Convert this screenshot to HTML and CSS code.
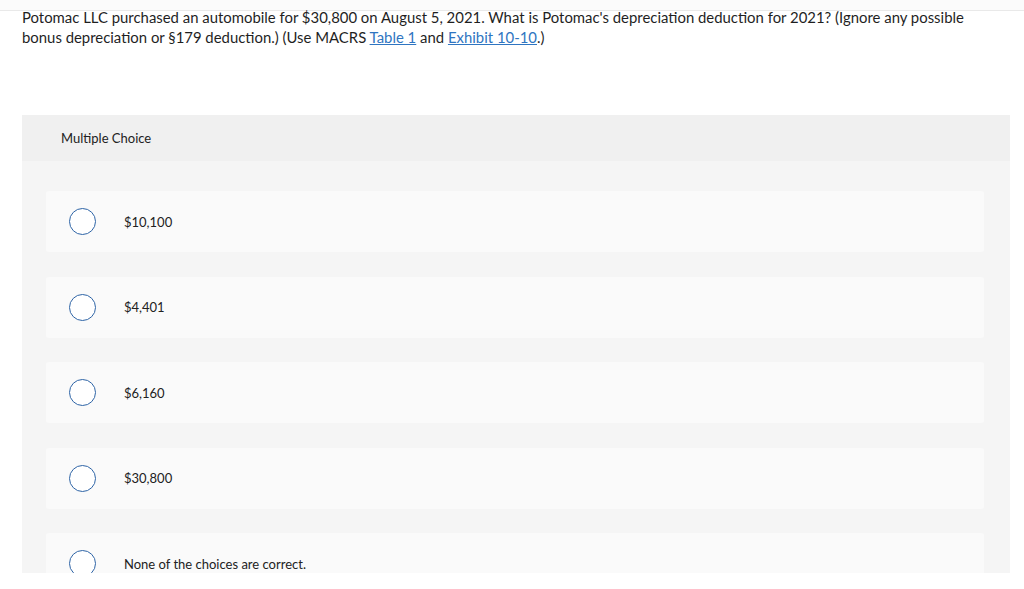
FILE: index.html
```html
<!DOCTYPE html>
<html lang="en">
<head>
<meta charset="utf-8">
<title>Multiple Choice</title>
<link rel="stylesheet" href="styles.css">
</head>
<body>
<div class="topbar"></div>
<div class="page">
  <p class="question">Potomac LLC purchased an automobile for $30,800 on August 5, 2021. What is Potomac's depreciation deduction for 2021? (Ignore any possible bonus depreciation or §179 deduction.) (Use MACRS <a href="#">Table 1</a> and <a href="#">Exhibit 10-10</a>.)</p>
  <section class="mc">
    <div class="mc-head">Multiple Choice</div>
    <div class="mc-body">
      <label class="opt"><span class="radio"></span><span class="opt-text">$10,100</span></label>
      <label class="opt"><span class="radio"></span><span class="opt-text">$4,401</span></label>
      <label class="opt"><span class="radio"></span><span class="opt-text">$6,160</span></label>
      <label class="opt"><span class="radio"></span><span class="opt-text">$30,800</span></label>
      <label class="opt"><span class="radio"></span><span class="opt-text">None of the choices are correct.</span></label>
    </div>
  </section>
</div>
</body>
</html>
```

FILE: styles.css
```css
html, body {
  margin: 0;
  padding: 0;
  background: #ffffff;
  overflow: hidden;
}
body {
  font-family: Lato, "Open Sans", "Liberation Sans", sans-serif;
  color: #222222;
  height: 589px;
}
.topbar {
  height: 10px;
  background: #fbfbfb;
  border-bottom: 1px solid #e9e9e9;
}
.page {
  padding: 0 14px 0 22px;
}
.question {
  margin: -4px 0 0 0;
  max-width: 962px;
  font-size: 14.9px;
  line-height: 20px;
  color: #1f1f1f;
}
.question a {
  color: #2f75c1;
  text-decoration: underline;
}
.mc {
  margin-top: 68px;
  width: 988px;
  height: 458px;
  overflow: hidden;
  background: #f5f5f5;
}
.mc-head {
  height: 46px;
  display: flex;
  align-items: center;
  padding-left: 39px;
  background: #f0f0f0;
  font-size: 13px;
  color: #222;
}
.mc-body {
  padding: 30px 26px 0 24px;
  display: flex;
  flex-direction: column;
  gap: 24.5px;
}
.opt {
  height: 61px;
  flex: 0 0 61px;
  background: #fafafa;
  border-radius: 3px;
  display: flex;
  align-items: center;
  padding-left: 23px;
  font-size: 13px;
  color: #222;
}
.radio {
  width: 25px;
  height: 25px;
  border: 1px solid #2e64a6;
  border-radius: 50%;
  background: #fff;
  flex: 0 0 auto;
}
.opt-text {
  margin-left: 28px;
}
```
